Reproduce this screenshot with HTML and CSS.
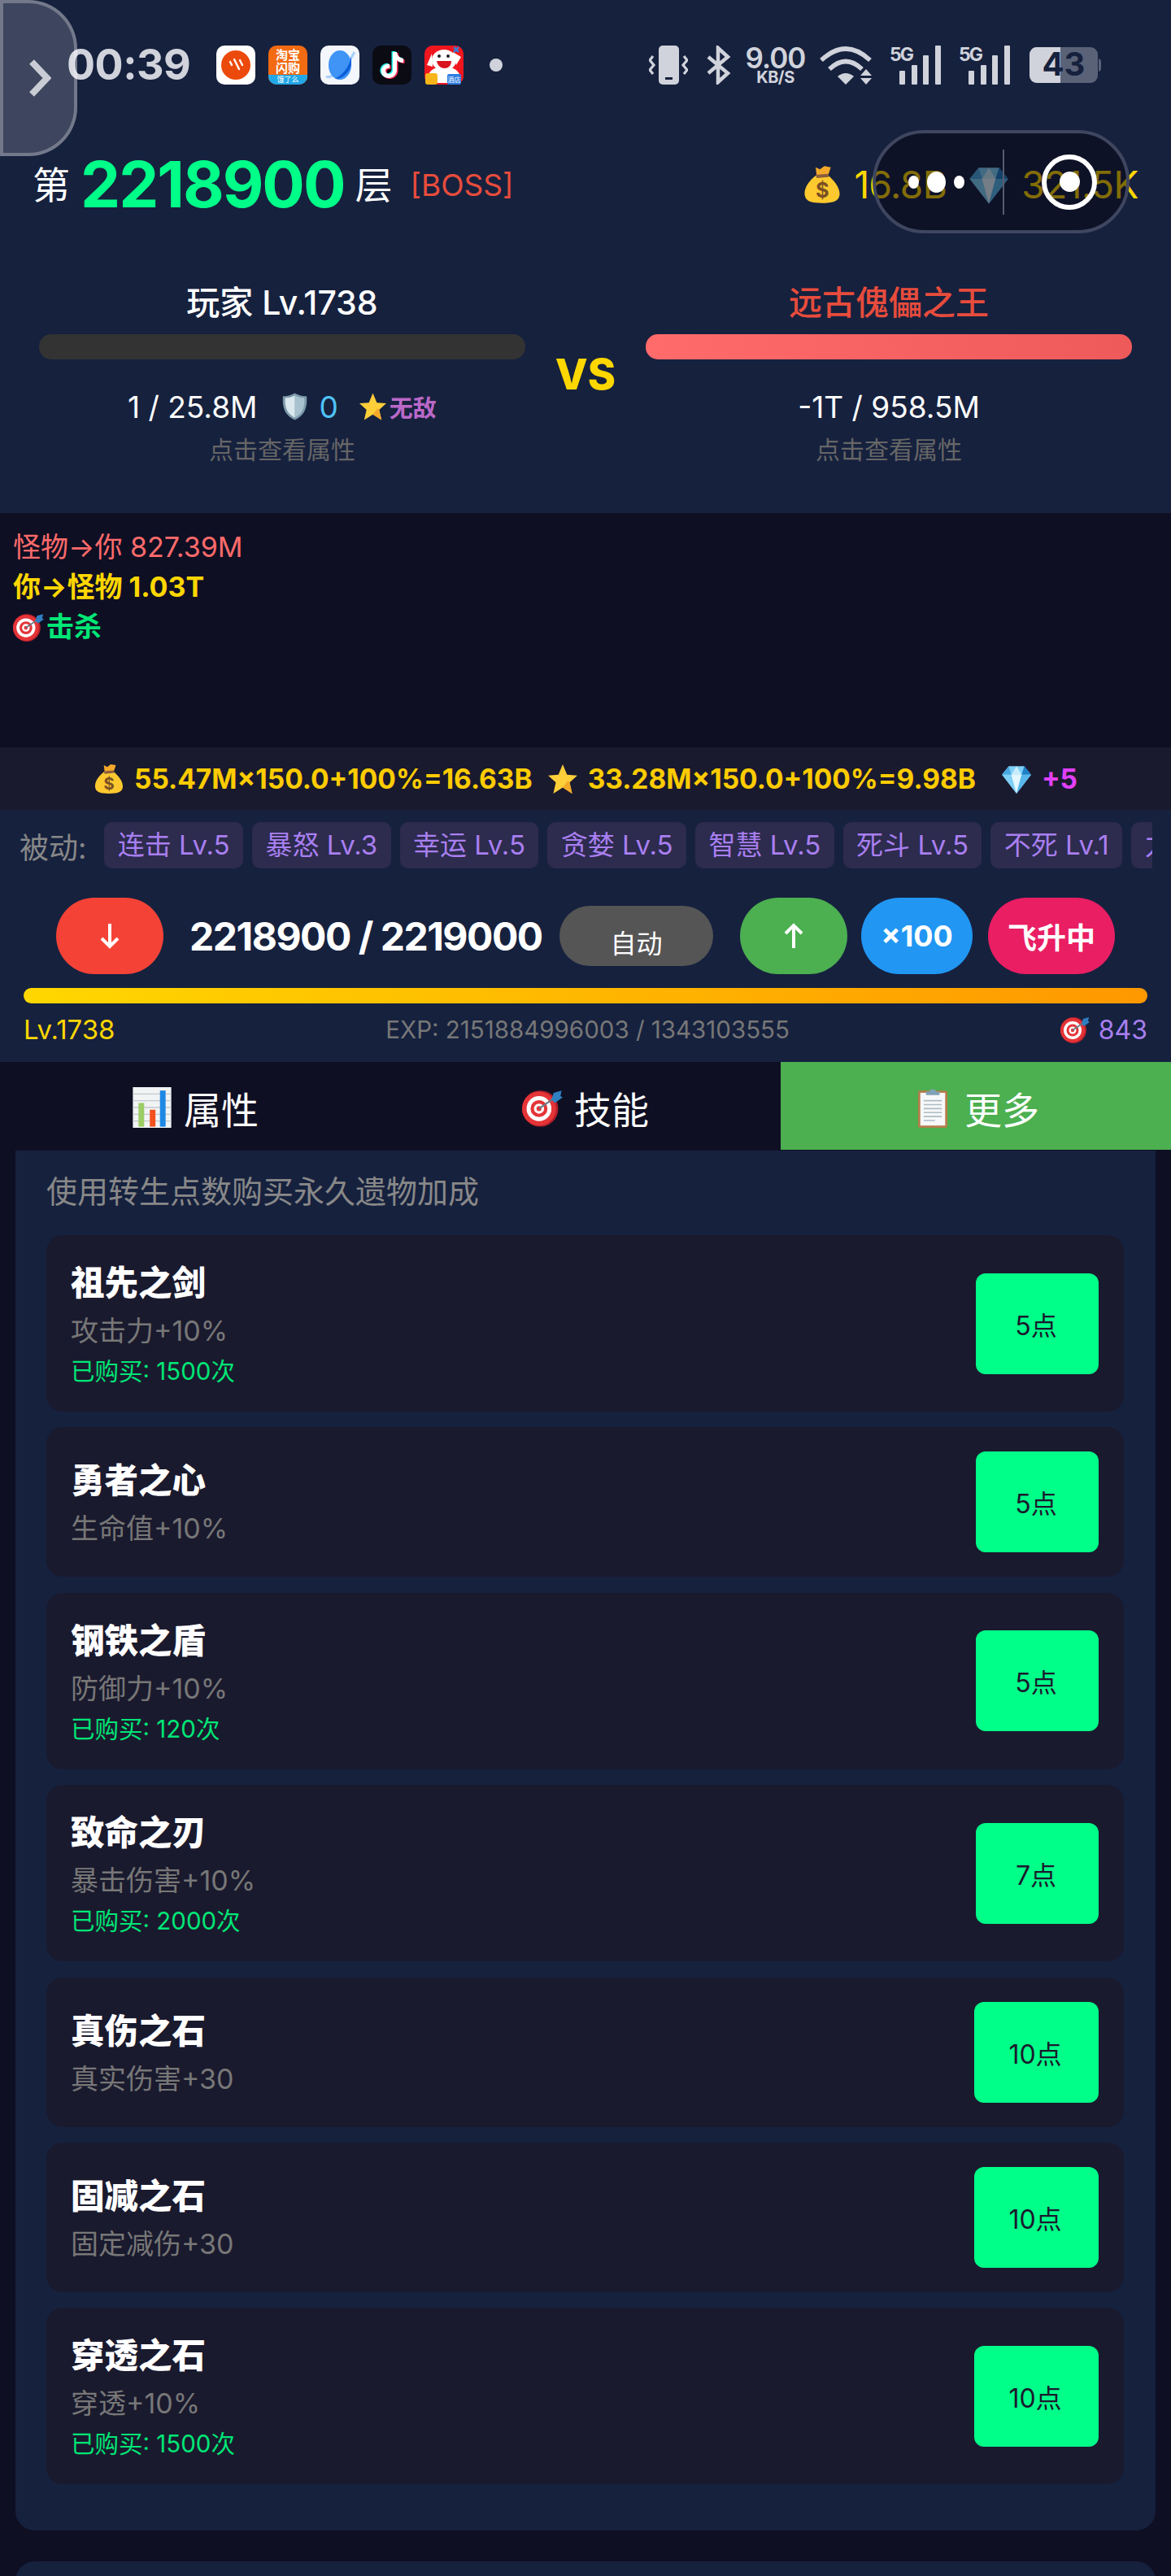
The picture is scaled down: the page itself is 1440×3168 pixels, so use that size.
FILE: index.html
```html
<!DOCTYPE html>
<html lang="zh-CN">
  <head>
    <meta charset="UTF-8" />
    <meta name="viewport" content="width=device-width, initial-scale=1.0" />
    <title>无尽爬塔</title>
    <link rel="stylesheet" href="styles.css">
  </head>
  <body>
    <!-- shared pictograms -->
    <svg class="sprite" aria-hidden="true">
      <symbol id="i-bag" viewBox="0 0 36 36">
        <path d="M13 9 C5 15 1 22 2 28 C3 34 9 35 18 35 C27 35 33 34 34 28 C35 22 30 15 23 9Z" fill="#fdc92f"/>
        <path d="M12 2 L16 4 L20 1 L26 2 L24 8 L23 10 L13 10Z" fill="#f4a92a"/>
        <path d="M12 9 L24 8 L24 11 L13 12Z" fill="#8b5e3c"/>
        <text x="18" y="30" class="bag-sign">$</text>
      </symbol>
      <symbol id="i-gem" viewBox="0 0 36 36">
        <path d="M9 3 H27 L35 13 L18 35 L1 13Z" fill="#7fd0f7"/>
        <path d="M9 3 L12 13 H1Z" fill="#4aa8e0"/>
        <path d="M27 3 L35 13 H24Z" fill="#1d7fc4"/>
        <path d="M12 13 H24 L18 3Z" fill="#c8edfc"/>
        <path d="M12 13 H24 L18 35Z" fill="#e4f7ff"/>
        <path d="M24 13 H35 L18 35Z" fill="#58b6ea"/>
      </symbol>
      <symbol id="i-star" viewBox="0 0 36 36">
        <path d="M18 1 L23 13 L35 14 L26 22 L29 35 L18 28 L7 35 L10 22 L1 14 L13 13Z" fill="#ffcf3a"/>
        <path d="M26 22 L29 35 L18 28 L24 20Z" fill="#f4a92a"/>
      </symbol>
      <symbol id="i-shield" viewBox="0 0 36 36">
        <path d="M18 1 C23 4 28 5 33 5 C34 18 31 29 18 35 C5 29 2 18 3 5 C8 5 13 4 18 1Z" fill="#7d9bab"/>
        <path d="M18 4 C22 6 26 7 30 7 C31 18 28 27 18 32Z" fill="#a9c2cf"/>
        <path d="M18 4 C14 6 10 7 6 7 C5 18 8 27 18 32Z" fill="#dbe8ee"/>
      </symbol>
      <symbol id="i-target" viewBox="0 0 36 36">
        <circle cx="16" cy="19" r="16" fill="#b7202a"/>
        <circle cx="15" cy="19" r="15" fill="#e53438"/>
        <circle cx="15" cy="19" r="11" fill="#fff"/>
        <circle cx="15" cy="19" r="7.5" fill="#e53438"/>
        <circle cx="15" cy="19" r="4.5" fill="#fff"/>
        <circle cx="15" cy="19" r="2.2" fill="#e53438"/>
        <path d="M15 19 L28 10" stroke="#6b7a86" stroke-width="1.6"/>
        <path d="M26 11 L28 5 L35 3 L34 8 L36 9 L29 14Z" fill="#2f7fc1"/>
      </symbol>
      <symbol id="i-chart" viewBox="0 0 36 36">
        <rect x="1" y="0" width="34" height="36" fill="#f1f3f4"/>
        <path d="M1 6 H35 M1 12 H35 M1 18 H35 M1 24 H35 M1 30 H35" stroke="#c3c9cd" stroke-width="1"/>
        <rect x="6" y="14" width="5" height="21" fill="#9ccc65"/>
        <rect x="16" y="20" width="5" height="15" fill="#f4511e"/>
        <rect x="25" y="3" width="5" height="32" fill="#1e88e5"/>
      </symbol>
      <symbol id="i-board" viewBox="0 0 36 36">
        <rect x="5" y="3" width="26" height="33" rx="2" fill="#b57c4c"/>
        <rect x="7" y="5" width="22" height="29" fill="#f7f8f9"/>
        <path d="M10 12 H26 M10 15.500 H26 M10 19 H26 M10 22.500 H26 M10 26 H26 M10 29.500 H20" stroke="#aebcc6" stroke-width="1.200"/>
        <path d="M12 7 V4 H15 C15 1 21 1 21 4 H24 V7Z" fill="#7fa3b8"/>
      </symbol>
    </svg>

    <!-- floating handle, left edge -->
    <div class="side-tab">
      <svg viewBox="0 0 28 48" width="28" height="48"><path d="M4 4 L23 24 L4 44" fill="none" stroke="#c9ccd4" stroke-width="8"/></svg>
    </div>

    <!-- floating capsule, top right -->
    <div class="capsule">
      <div class="capsule-dots"><i></i><b></b><i></i></div>
      <span class="capsule-line"></span>
      <div class="capsule-ring"><b></b></div>
    </div>

    <section class="hero">
      <div class="status-bar">
        <span class="clock">00:39</span>
        <div class="apps">
          <svg viewBox="0 0 48 48" width="48" height="48">
            <rect width="48" height="48" rx="10" fill="#fff"/>
            <circle cx="24" cy="24" r="18" fill="#ec4a0c"/>
            <path d="M17 20 L19 24 M22 17 L28 29 M29 18 L32 24" stroke="#fff" stroke-width="2.400" stroke-linecap="round"/>
          </svg>
          <svg viewBox="0 0 48 48" width="48" height="48">
            <rect width="48" height="48" rx="10" fill="#f26a12"/>
            <path d="M0 36 H48 V38 A10 10 0 0 1 38 48 H10 A10 10 0 0 1 0 38Z" fill="#21a7e8"/>
            <text x="24" y="17" class="app-word">淘宝</text>
            <text x="24" y="33" class="app-word">闪购</text>
            <text x="24" y="45" class="app-mini">饿了么</text>
          </svg>
          <svg viewBox="0 0 48 48" width="48" height="48">
            <rect width="48" height="48" rx="10" fill="#f3f6fb"/>
            <path d="M7 38 C14 42 34 24 42 8" stroke="#a9d0fb" stroke-width="3" fill="none"/>
            <ellipse cx="24" cy="24" rx="14" ry="18" fill="#3f94f6"/>
            <path d="M38 22 C38 30 28 42 18 41 C26 36 34 30 38 14Z" fill="#0d5fd8"/>
          </svg>
          <svg viewBox="0 0 48 48" width="48" height="48">
            <rect width="48" height="48" rx="10" fill="#0b0b14"/>
            <path transform="translate(-1.500 -1)" d="M25 8 H30 C31 13 33 15 38 16 V21 C34 21 32 20 30 18 V30 C30 36 25 40 20 40 C14 40 10 35 11 30 C12 25 17 22 21 23 V28 C18 27 16 29 16 31 C16 33 18 35 20 35 C23 35 25 33 25 30Z" fill="#25f4ee"/>
            <path transform="translate(1.500 1)" d="M25 8 H30 C31 13 33 15 38 16 V21 C34 21 32 20 30 18 V30 C30 36 25 40 20 40 C14 40 10 35 11 30 C12 25 17 22 21 23 V28 C18 27 16 29 16 31 C16 33 18 35 20 35 C23 35 25 33 25 30Z" fill="#fe2c55"/>
            <path d="M25 8 H30 C31 13 33 15 38 16 V21 C34 21 32 20 30 18 V30 C30 36 25 40 20 40 C14 40 10 35 11 30 C12 25 17 22 21 23 V28 C18 27 16 29 16 31 C16 33 18 35 20 35 C23 35 25 33 25 30Z" fill="#fff"/>
          </svg>
          <svg viewBox="0 0 48 48" width="48" height="48">
            <rect width="48" height="48" rx="10" fill="#f0161e"/>
            <path d="M3 46 C3 32 10 26 24 26 C38 26 45 32 45 46Z" fill="#fff"/>
            <ellipse cx="24" cy="18" rx="15" ry="13" fill="#fff"/>
            <path d="M9 10 L3 24 L10 26Z M35 8 L45 14 L39 24Z" fill="#fff"/>
            <circle cx="18" cy="13" r="2" fill="#222"/>
            <circle cx="29" cy="13" r="2" fill="#222"/>
            <path d="M15 19 H33 C33 31 17 31 15 19Z" fill="#d8141c"/>
            <path d="M36 2 L42 8 M42 2 L36 8" stroke="#3a7bd5" stroke-width="2.500"/>
            <rect x="1" y="34" width="15" height="14" rx="3" fill="#f8b51a"/>
            <rect x="28" y="35" width="17" height="13" rx="2" fill="#2f7de1"/>
            <text x="36.500" y="45" class="app-tag">酒店</text>
          </svg>
        </div>
        <span class="status-dot"></span>

        <div class="sys-icons">
          <svg viewBox="0 0 48 48" width="48" height="48" class="sys-fill">
            <rect x="12" width="25" height="48" rx="5"/>
            <rect x="20" y="39" width="9" height="3" fill="#16213e"/>
            <path d="M5 13 L1 18 L6 24 L1 30 L5 35 M43 13 L47 18 L42 24 L47 30 L43 35" fill="none" stroke="#d0d3db" stroke-width="3.200"/>
          </svg>
          <svg viewBox="0 0 31 48" width="31" height="48" class="sys-bt">
            <path d="M3 14 L27 34 L15 45 V3 L27 14 L3 34" fill="none" stroke="#d0d3db" stroke-width="4.500"/>
          </svg>
          <div class="speed"><b>9.00</b><span>KB/S</span></div>
          <svg viewBox="0 0 67 48" width="67" height="48" class="sys-fill">
            <path d="M2 18 Q32 -10 62 18 M12 29 Q32 10 52 29" fill="none" stroke="#d0d3db" stroke-width="5.500"/>
            <path d="M22 38 Q32 30 42 38 L32 48Z"/>
            <path d="M50 37 L57 29 L64 37Z M50 40 H64 L57 48Z"/>
          </svg>
          <svg viewBox="0 0 63 48" width="63" height="48" class="sys-fill sys-sig">
            <text x="0" y="19" class="sig-word">5G</text>
            <rect x="12" y="31" width="7" height="17" rx="1"/>
            <rect x="27" y="24" width="7" height="24" rx="1"/>
            <rect x="41" y="12" width="7" height="36" rx="1"/>
            <rect x="56" width="7" height="48" rx="1"/>
          </svg>
          <svg viewBox="0 0 63 48" width="63" height="48" class="sys-fill sys-sig2">
            <text x="0" y="19" class="sig-word">5G</text>
            <rect x="12" y="31" width="7" height="17" rx="1"/>
            <rect x="27" y="24" width="7" height="24" rx="1"/>
            <rect x="41" y="12" width="7" height="36" rx="1"/>
            <rect x="56" width="7" height="48" rx="1"/>
          </svg>
          <svg viewBox="0 0 88 44" width="88" height="44" class="sys-batt">
            <rect width="84" height="44" rx="9" fill="#5a6278"/>
            <path d="M9 0 H38 V44 H9 A9 9 0 0 1 0 35 V9 A9 9 0 0 1 9 0Z" fill="#d0d3db"/>
            <path d="M85 14 Q88 15 88 18 V26 Q88 29 85 30Z" fill="#5a6278"/>
            <text x="42" y="35" class="batt-word">43</text>
          </svg>
        </div>
      </div>

      <div class="floor-row">
        <span class="floor-word">第</span>
        <span class="floor-num">2218900</span>
        <span class="floor-word">层</span>
        <span class="floor-boss">[BOSS]</span>
        <div class="wallet">
          <svg class="wallet-icon"><use href="#i-bag"/></svg>
          <span>16.8B</span>
          <svg class="wallet-icon gem"><use href="#i-gem"/></svg>
          <span>321.5K</span>
        </div>
      </div>

      <div class="fighters">
        <div class="fighter">
          <div class="fighter-name">玩家 Lv.1738</div>
          <div class="hp-bar"></div>
          <div class="hp-line">
            <span>1 / 25.8M</span>
            <svg class="mini-icon shield"><use href="#i-shield"/></svg>
            <span class="armor">0</span>
            <svg class="mini-icon star"><use href="#i-star"/></svg>
            <span class="buff">无敌</span>
          </div>
          <div class="hint">点击查看属性</div>
        </div>
        <div class="vs">VS</div>
        <div class="fighter">
          <div class="fighter-name boss">远古傀儡之王</div>
          <div class="hp-bar full"></div>
          <div class="hp-line"><span>-1T / 958.5M</span></div>
          <div class="hint">点击查看属性</div>
        </div>
      </div>
    </section>

    <section class="battle-log">
      <div class="log-hit">怪物→你 827.39M</div>
      <div class="log-deal">你→怪物 1.03T</div>
      <div class="log-kill"><svg class="log-icon"><use href="#i-target"/></svg>击杀</div>
    </section>

    <section class="income">
      <svg class="income-icon"><use href="#i-bag"/></svg>
      <span>55.47M×150.0+100%=16.63B</span>
      <svg class="income-icon star"><use href="#i-star"/></svg>
      <span>33.28M×150.0+100%=9.98B</span>
      <svg class="income-icon gem"><use href="#i-gem"/></svg>
      <span class="plus">+5</span>
    </section>

    <section class="controls">
      <div class="passives">
        <span class="passive-label">被动:</span>
        <div class="passive-list">
          <span class="chip">连击 Lv.5</span>
          <span class="chip">暴怒 Lv.3</span>
          <span class="chip">幸运 Lv.5</span>
          <span class="chip">贪婪 Lv.5</span>
          <span class="chip">智慧 Lv.5</span>
          <span class="chip">死斗 Lv.5</span>
          <span class="chip">不死 Lv.1</span>
          <span class="chip">力量 Lv.1</span>
        </div>
      </div>

      <div class="floor-nav">
        <button class="round red">
          <svg viewBox="0 0 24 32" width="24" height="32"><path d="M12 1 V29 M2 19 L12 29 L22 19" fill="none" stroke="#fff" stroke-width="4"/></svg>
        </button>
        <span class="floor-count">2218900 / 2219000</span>
        <button class="auto">自动</button>
        <button class="round green">
          <svg viewBox="0 0 24 32" width="24" height="32"><path d="M12 31 V3 M2 13 L12 3 L22 13" fill="none" stroke="#fff" stroke-width="4"/></svg>
        </button>
        <button class="round blue">×100</button>
        <button class="round pink">飞升中</button>
      </div>

      <div class="exp-bar"></div>
      <div class="exp-info">
        <span class="exp-level">Lv.1738</span>
        <span class="exp-text">EXP: 2151884996003 / 1343103555</span>
        <span class="exp-points"><svg class="points-icon"><use href="#i-target"/></svg>843</span>
      </div>
    </section>

    <nav class="tabs">
      <a class="tab"><svg class="tab-icon"><use href="#i-chart"/></svg>属性</a>
      <a class="tab"><svg class="tab-icon"><use href="#i-target"/></svg>技能</a>
      <a class="tab active"><svg class="tab-icon"><use href="#i-board"/></svg>更多</a>
    </nav>

    <section class="panel">
      <h2 class="panel-title">使用转生点数购买永久遗物加成</h2>
      <div class="relics">
        <div class="relic">
          <div class="relic-info">
            <div class="relic-name">祖先之剑</div>
            <div class="relic-desc">攻击力+10%</div>
            <div class="relic-count">已购买: 1500次</div>
          </div>
          <button class="relic-buy">5点</button>
        </div>
        <div class="relic">
          <div class="relic-info">
            <div class="relic-name">勇者之心</div>
            <div class="relic-desc">生命值+10%</div>
          </div>
          <button class="relic-buy">5点</button>
        </div>
        <div class="relic">
          <div class="relic-info">
            <div class="relic-name">钢铁之盾</div>
            <div class="relic-desc">防御力+10%</div>
            <div class="relic-count">已购买: 120次</div>
          </div>
          <button class="relic-buy">5点</button>
        </div>
        <div class="relic">
          <div class="relic-info">
            <div class="relic-name">致命之刃</div>
            <div class="relic-desc">暴击伤害+10%</div>
            <div class="relic-count">已购买: 2000次</div>
          </div>
          <button class="relic-buy">7点</button>
        </div>
        <div class="relic">
          <div class="relic-info">
            <div class="relic-name">真伤之石</div>
            <div class="relic-desc">真实伤害+30</div>
          </div>
          <button class="relic-buy wide">10点</button>
        </div>
        <div class="relic">
          <div class="relic-info">
            <div class="relic-name">固减之石</div>
            <div class="relic-desc">固定减伤+30</div>
          </div>
          <button class="relic-buy wide">10点</button>
        </div>
        <div class="relic">
          <div class="relic-info">
            <div class="relic-name">穿透之石</div>
            <div class="relic-desc">穿透+10%</div>
            <div class="relic-count">已购买: 1500次</div>
          </div>
          <button class="relic-buy wide">10点</button>
        </div>
      </div>
    </section>
    <section class="panel next"></section>
  </body>
</html>
```

FILE: styles.css
```css
* {
  box-sizing: border-box;
}
html,
body {
  margin: 0;
  padding: 0;
  height: 3168px;
  overflow: hidden;
}
body {
  position: relative;
  background: #0f0f23;
  color: #fff;
  font-family: Inter, "Noto Sans CJK SC", sans-serif;
}
button {
  font-family: inherit;
  border: 0;
  color: #fff;
}
.sprite {
  position: absolute;
  width: 0;
  height: 0;
}
.bag-sign {
  font-size: 19px;
  font-weight: 700;
  fill: #7a4f24;
  text-anchor: middle;
}

/* overlays */
.side-tab {
  position: absolute;
  top: 0;
  left: 0;
  width: 95px;
  height: 192px;
  z-index: 5;
  display: flex;
  align-items: center;
  padding-left: 31px;
  background: rgba(255, 255, 255, 0.17);
  border: 4px solid rgba(255, 255, 255, 0.28);
  border-radius: 0 60px 60px 0;
}
.capsule {
  position: absolute;
  top: 160px;
  left: 1073px;
  width: 316px;
  height: 127px;
  z-index: 5;
  background: rgba(5, 4, 14, 0.5);
  border: 4px solid #3f465f;
  border-radius: 64px;
  display: flex;
  align-items: center;
}
.capsule-dots {
  display: flex;
  align-items: center;
  gap: 10px;
  margin-left: 40px;
}
.capsule-dots i {
  width: 13px;
  height: 16px;
  border-radius: 50%;
  background: #fff;
}
.capsule-dots b {
  width: 23px;
  height: 26px;
  border-radius: 50%;
  background: #fff;
}
.capsule-line {
  width: 2px;
  height: 80px;
  margin-left: 47px;
  background: #565c70;
}
.capsule-ring {
  width: 68px;
  height: 68px;
  margin-left: 46px;
  border: 6px solid #fff;
  border-radius: 50%;
  display: flex;
  align-items: center;
  justify-content: center;
}
.capsule-ring b {
  width: 25px;
  height: 25px;
  border-radius: 50%;
  background: #fff;
}

/* top section */
.hero {
  height: 631px;
  background: #16213e;
  overflow: hidden;
}
.status-bar {
  display: flex;
  align-items: center;
  height: 48px;
  margin-top: 56px;
  padding-left: 82px;
  padding-right: 86px;
  color: #d0d3db;
}
.clock {
  width: 150px;
  font-size: 52px;
  font-weight: 700;
  letter-spacing: -0.5px;
  line-height: 48px;
  white-space: nowrap;
}
.apps {
  display: flex;
  gap: 16px;
  margin-left: 34px;
}
.app-word {
  font-size: 15px;
  font-weight: 700;
  fill: #fff;
  text-anchor: middle;
}
.app-mini {
  font-size: 9px;
  fill: #fff;
  text-anchor: middle;
}
.app-tag {
  font-size: 8px;
  fill: #fff;
  text-anchor: middle;
}
.status-dot {
  width: 16px;
  height: 16px;
  margin-left: 32px;
  border-radius: 50%;
  background: #d0d3db;
}
.sys-icons {
  display: flex;
  align-items: center;
  gap: 15px;
  margin-left: auto;
}
.sys-fill {
  fill: #d0d3db;
}
.sys-bt {
  margin-left: 7px;
}
.sys-sig {
  margin-left: 4px;
}
.sys-sig2 {
  margin-left: 7px;
}
.sys-batt {
  margin-left: 9px;
}
.sig-word {
  font-size: 23px;
  font-weight: 700;
  letter-spacing: -2px;
}
.batt-word {
  font-size: 40px;
  font-weight: 700;
  fill: #16213e;
  text-anchor: middle;
}
.speed {
  width: 79px;
  display: flex;
  flex-direction: column;
  align-items: center;
  height: 48px;
}
.speed b {
  font-size: 35px;
  font-weight: 600;
  line-height: 30px;
  letter-spacing: -1px;
}
.speed span {
  font-size: 20px;
  font-weight: 700;
  line-height: 18px;
  letter-spacing: -0.5px;
}

.floor-row {
  display: flex;
  align-items: center;
  height: 58px;
  margin-top: 94px;
  padding: 0 40px;
}
.floor-word {
  font-size: 46px;
  line-height: 58px;
}
.floor-num {
  margin: 0 13px;
  font-size: 78px;
  font-weight: 700;
  letter-spacing: -2px;
  line-height: 58px;
  color: #00ff88;
}
.floor-boss {
  margin-left: 22px;
  font-size: 37px;
  color: #e74c3c;
}
.wallet {
  display: flex;
  align-items: center;
  margin-left: auto;
  font-size: 46px;
  letter-spacing: -0.5px;
  color: #ffd700;
}
.wallet-icon {
  width: 48px;
  height: 50px;
  margin-right: 15px;
}
.wallet-icon.gem {
  width: 52px;
  margin: 0 14px 0 26px;
}

.fighters {
  display: flex;
  align-items: center;
  margin-top: 87px;
  padding: 0 48px;
}
.fighter {
  flex: 1;
  text-align: center;
}
.fighter-name {
  font-size: 41px;
  font-weight: 500;
  line-height: 58px;
}
.fighter-name.boss {
  color: #e74c3c;
}
.hp-bar {
  height: 31px;
  margin-top: 10px;
  border-radius: 15px;
  background: #333;
}
.hp-bar.full {
  background: linear-gradient(90deg, #ff6b6b, #ee5a5a);
}
.hp-line {
  display: flex;
  align-items: center;
  justify-content: center;
  height: 52px;
  margin-top: 32px;
  font-size: 37px;
}
.mini-icon {
  width: 35px;
  height: 38px;
}
.mini-icon.shield {
  margin: 0 13px 0 28px;
}
.mini-icon.star {
  margin-left: 25px;
}
.armor {
  color: #4fc3f7;
}
.buff {
  margin-left: 3px;
  font-size: 29px;
  font-weight: 700;
  color: #ba68c8;
}
.hint {
  margin-top: 7px;
  font-size: 30px;
  line-height: 40px;
  color: #666;
}
.vs {
  width: 148px;
  padding-top: 4px;
  text-align: center;
  font-size: 52px;
  font-weight: 800;
  color: #ffd700;
}

/* log */
.battle-log {
  height: 288px;
  padding: 17px 16px;
  background: #0f0f23;
  font-size: 34px;
  line-height: 49px;
}
.log-hit {
  color: #ff6b6b;
}
.log-deal {
  font-weight: 700;
  color: #ffd700;
}
.log-kill {
  display: flex;
  align-items: center;
  font-weight: 700;
  color: #00e676;
}
.log-icon {
  width: 38px;
  height: 38px;
  margin-right: 3px;
}

/* income */
.income {
  display: flex;
  align-items: center;
  justify-content: center;
  height: 77px;
  background: #1a1a2e;
  font-size: 33.500px;
  font-weight: 700;
  color: #ffcc00;
}
.income-icon {
  width: 38px;
  height: 38px;
  margin-right: 12px;
}
.income-icon.star {
  margin-left: 18px;
}
.income-icon.gem {
  margin-left: 31px;
}
.plus {
  color: #e040fb;
}

/* passives, floor switcher, exp */
.controls {
  height: 310px;
  padding: 15px 29px 0;
  background: #16213e;
}
.passives {
  display: flex;
  align-items: center;
  gap: 22px;
  margin: 0 -6px 0 -5px;
}
.passive-label {
  flex: none;
  font-size: 36px;
  color: #888;
}
.passive-list {
  display: flex;
  gap: 11px;
  overflow: hidden;
}
.chip {
  flex: none;
  height: 57px;
  padding: 0 16.400px;
  border-radius: 10px;
  background: #2d2b4e;
  font-size: 33px;
  line-height: 57px;
  color: #a87ff0;
}
.floor-nav {
  display: flex;
  align-items: center;
  height: 94px;
  margin-top: 36px;
  padding-left: 40px;
}
.round {
  height: 94px;
  width: 132px;
  border-radius: 47px;
  display: flex;
  align-items: center;
  justify-content: center;
}
.round.red {
  background: #f44336;
}
.round.green {
  margin-left: 33px;
  background: #4caf50;
}
.round.blue {
  width: 137px;
  margin-left: 17px;
  background: #2196f3;
  font-size: 36px;
  font-weight: 700;
}
.round.pink {
  width: 156px;
  margin-left: 19px;
  background: #e91e63;
  font-size: 36px;
  font-weight: 700;
}
.floor-count {
  width: 433px;
  margin: 0 22px 0 32px;
  font-size: 48px;
  font-weight: 700;
  letter-spacing: -1.500px;
  white-space: nowrap;
}
.auto {
  width: 189px;
  height: 74px;
  padding-top: 14px;
  border-radius: 37px;
  background: #555;
  font-size: 32px;
}
.exp-bar {
  height: 19px;
  margin-top: 17px;
  border-radius: 10px;
  background: linear-gradient(90deg, #ffd700, #ff9800);
}
.exp-info {
  display: flex;
  align-items: center;
  justify-content: space-between;
  height: 36px;
  margin-top: 14px;
}
.exp-level {
  font-size: 33px;
  color: #ffd700;
}
.exp-text {
  font-size: 29.500px;
  color: #777;
}
.exp-points {
  display: flex;
  align-items: center;
  font-size: 32px;
  color: #a87ff0;
}
.points-icon {
  width: 36px;
  height: 36px;
  margin-right: 11px;
}

/* tabs */
.tabs {
  display: flex;
  height: 108px;
  margin-bottom: 1px;
  background: #0f0f23;
}
.tab {
  flex: 1;
  display: flex;
  align-items: center;
  justify-content: center;
  gap: 14px;
  font-size: 46px;
  padding-top: 4px;
}
.tab.active {
  background: #4caf50;
}
.tab-icon {
  width: 50px;
  height: 50px;
}

/* relic shop */
.panel {
  height: 1697px;
  margin: 0 19px;
  padding: 23px 38px 0;
  background: #16213e;
  border-radius: 0 0 24px 24px;
}
.panel.next {
  height: 60px;
  margin-top: 38px;
  border-radius: 24px 24px 0 0;
}
.panel-title {
  margin: 0 0 27px;
  font-size: 38px;
  font-weight: 400;
  line-height: 54px;
  color: #888;
}
.relics {
  display: flex;
  flex-direction: column;
  gap: 19.400px;
  margin-right: 1px;
}
.relic {
  display: flex;
  align-items: center;
  justify-content: space-between;
  padding: 30px 31px 30px 30px;
  border-radius: 20px;
  background: #1a1a2e;
}
.relic-name {
  font-size: 41.500px;
  font-weight: 900;
  line-height: 58px;
}
.relic-desc {
  margin-top: 8px;
  font-size: 34px;
  line-height: 44px;
  color: #777;
}
.relic-count {
  margin-top: 8px;
  font-size: 29.500px;
  line-height: 39px;
  color: #00e676;
}
.relic-buy {
  width: 151px;
  height: 124px;
  padding-right: 9px;
  border-radius: 12px;
  background: #00ff88;
  font-size: 32px;
  color: #1a1a2e;
}
.relic-buy.wide {
  width: 153px;
}
```
